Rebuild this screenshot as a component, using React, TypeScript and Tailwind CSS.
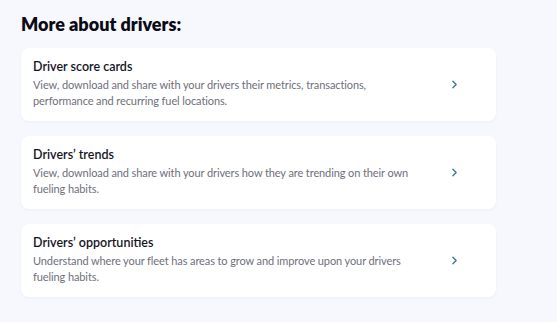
import { ChevronRight } from 'lucide-react';

const items = [
  {
    title: 'Driver score cards',
    lines: ['View, download and share with your drivers their metrics, transactions,', 'performance and recurring fuel locations.'],
  },
  {
    title: 'Drivers’ trends',
    lines: ['View, download and share with your drivers how they are trending on their own', 'fueling habits.'],
  },
  {
    title: 'Drivers’ opportunities',
    lines: ['Understand where your fleet has areas to grow and improve upon your drivers', 'fueling habits.'],
  },
];

export default function App() {
  return (
    <div className="w-[557px] h-[322px] bg-[#f7f8fd] px-[21px] pt-[12px] font-['Lato',sans-serif]">
      <h2 className="text-[18px] leading-[24px] font-extrabold text-[#0b0b16] mb-[12px]">More about drivers:</h2>

      <div className="flex flex-col gap-[15px] w-[475px]">
        {items.map((item) => (
          <div
            key={item.title}
            className="flex items-center bg-white rounded-[8px] pl-[12px] pr-[35px] pt-[11px] pb-[12px] shadow-[0_1px_3px_rgba(20,30,60,0.05)]"
          >
            <div className="flex-1 min-w-0">
              <h3 className="text-[12.5px] leading-[16px] font-semibold text-[#15151f] mb-[2px]">{item.title}</h3>
              <p className="text-[11px] leading-[16px] text-[#6e6f7c] whitespace-nowrap tracking-[-0.1px]">
                {item.lines[0]}
                <br />
                {item.lines[1]}
              </p>
            </div>
            <ChevronRight className="w-[13px] h-[13px] shrink-0 text-[#3f7189]" strokeWidth={2.4} />
          </div>
        ))}
      </div>
    </div>
  );
}
